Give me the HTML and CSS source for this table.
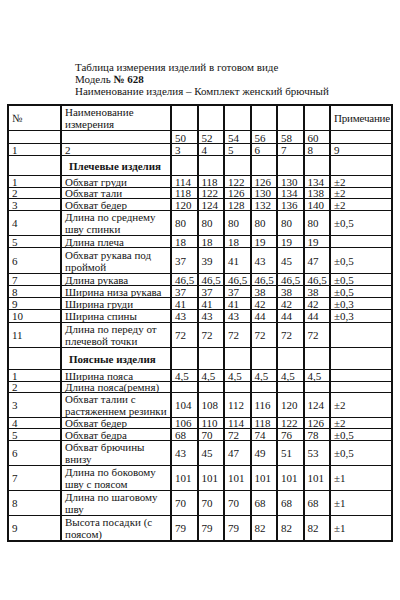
FILE: index.html
```html
<!DOCTYPE html>
<html lang="ru">
<head>
<meta charset="utf-8">
<link rel="stylesheet" href="styles.css">
</head>
<body>
<div class="page">
  <div class="title">
    <div>Таблица измерения изделий в готовом виде</div>
    <div>Модель <b>№ 628</b></div>
    <div>Наименование изделия – Комплект женский брючный</div>
  </div>
  <table class="sizes">
    <colgroup>
      <col class="c-num"><col class="c-name">
      <col class="c-size"><col class="c-size"><col class="c-size"><col class="c-size"><col class="c-size"><col class="c-size">
      <col class="c-note">
    </colgroup>
    <tr class="h26 tall"><td>№</td><td class="top">Наименование измерения</td><td></td><td></td><td></td><td></td><td></td><td></td><td class="note">Примечание</td></tr>
    <tr class="h13"><td></td><td></td><td class="low">50</td><td class="low">52</td><td class="low">54</td><td class="low">56</td><td class="low">58</td><td class="low">60</td><td></td></tr>
    <tr class="h12"><td>1</td><td>2</td><td>3</td><td>4</td><td>5</td><td>6</td><td>7</td><td>8</td><td>9</td></tr>
    <tr class="h21"><td></td><td class="sec">Плечевые изделия</td><td></td><td></td><td></td><td></td><td></td><td></td><td></td></tr>
    <tr class="h12"><td>1</td><td>Обхват груди</td><td>114</td><td>118</td><td>122</td><td>126</td><td>130</td><td>134</td><td>±2</td></tr>
    <tr class="h11"><td>2</td><td>Обхват тали</td><td>118</td><td>122</td><td>126</td><td>130</td><td>134</td><td>138</td><td>±2</td></tr>
    <tr class="h12"><td>3</td><td>Обхват бедер</td><td>120</td><td>124</td><td>128</td><td>132</td><td>136</td><td>140</td><td>±2</td></tr>
    <tr class="h24 tall"><td>4</td><td>Длина по среднему шву спинки</td><td>80</td><td>80</td><td>80</td><td>80</td><td>80</td><td>80</td><td>±0,5</td></tr>
    <tr class="h12"><td>5</td><td>Длина плеча</td><td>18</td><td>18</td><td>18</td><td>19</td><td>19</td><td>19</td><td></td></tr>
    <tr class="h27 tall"><td>6</td><td>Обхват рукава под проймой</td><td>37</td><td>39</td><td>41</td><td>43</td><td>45</td><td>47</td><td>±0,5</td></tr>
    <tr class="h12"><td>7</td><td>Длина рукава</td><td>46,5</td><td>46,5</td><td>46,5</td><td>46,5</td><td>46,5</td><td>46,5</td><td>±0,5</td></tr>
    <tr class="h12"><td>8</td><td>Ширина низа рукава</td><td>37</td><td>37</td><td>37</td><td>38</td><td>38</td><td>38</td><td>±0,5</td></tr>
    <tr class="h12"><td>9</td><td>Ширина груди</td><td>41</td><td>41</td><td>41</td><td>42</td><td>42</td><td>42</td><td>±0,3</td></tr>
    <tr class="h13"><td>10</td><td>Ширина спины</td><td>43</td><td>43</td><td>43</td><td>44</td><td>44</td><td>44</td><td>±0,3</td></tr>
    <tr class="h24 tall"><td>11</td><td>Длина по переду от плечевой точки</td><td>72</td><td>72</td><td>72</td><td>72</td><td>72</td><td>72</td><td></td></tr>
    <tr class="h23"><td></td><td class="sec">Поясные изделия</td><td></td><td></td><td></td><td></td><td></td><td></td><td></td></tr>
    <tr class="h12"><td>1</td><td>Ширина пояса</td><td>4,5</td><td>4,5</td><td>4,5</td><td>4,5</td><td>4,5</td><td>4,5</td><td></td></tr>
    <tr class="h11"><td>2</td><td>Длина пояса(ремня)</td><td></td><td></td><td></td><td></td><td></td><td></td><td></td></tr>
    <tr class="h23 tall"><td>3</td><td>Обхват талии с растяженнем резинки</td><td>104</td><td>108</td><td>112</td><td>116</td><td>120</td><td>124</td><td>±2</td></tr>
    <tr class="h11"><td>4</td><td>Обхват бедер</td><td>106</td><td>110</td><td>114</td><td>118</td><td>122</td><td>126</td><td>±2</td></tr>
    <tr class="h12"><td>5</td><td>Обхват бедра</td><td>68</td><td>70</td><td>72</td><td>74</td><td>76</td><td>78</td><td>±0,5</td></tr>
    <tr class="h24 tall"><td>6</td><td>Обхват брючины внизу</td><td>43</td><td>45</td><td>47</td><td>49</td><td>51</td><td>53</td><td>±0,5</td></tr>
    <tr class="h25 tall"><td>7</td><td>Длина по боковому шву с поясом</td><td>101</td><td>101</td><td>101</td><td>101</td><td>101</td><td>101</td><td>±1</td></tr>
    <tr class="h25 tall"><td>8</td><td>Длина по шаговому шву</td><td>70</td><td>70</td><td>70</td><td>68</td><td>68</td><td>68</td><td>±1</td></tr>
    <tr class="h25 tall"><td>9</td><td>Высота посадки (с поясом)</td><td>79</td><td>79</td><td>79</td><td>82</td><td>82</td><td>82</td><td>±1</td></tr>
  </table>
</div>
</body>
</html>
```
FILE: styles.css
```css
html, body {
  margin: 0;
  padding: 0;
  background: #fff;
}
.page {
  padding: 61px 0 0 7px;
  font-family: "Liberation Serif", "Times New Roman", serif;
  font-size: 11px;
  line-height: 12px;
  color: #151515;
}
.title {
  margin-left: 68px;
  margin-bottom: 7px;
}
.title b {
  font-weight: bold;
}
.sizes {
  border-collapse: collapse;
  table-layout: fixed;
  width: 384px;
  border: 2px solid #111;
}
.c-num { width: 53px; }
.c-name { width: 110px; }
.c-size { width: 26.5px; }
.c-note { width: 62px; }
.sizes td {
  border: 1px solid #111;
  border-left-width: 2px;
  padding: 0 0 0 3px;
  vertical-align: middle;
  line-height: 10px;
  white-space: normal;
  overflow: hidden;
}
.sizes .tall td { line-height: 12px; }
.sizes td.note { letter-spacing: -0.2px; }
.sizes td.top { vertical-align: top; }
.sizes td.low { vertical-align: bottom; }
.sizes td.sec {
  font-weight: bold;
  padding-left: 7px;
}
.h11 td { height: 10px; }
.h12 td { height: 11px; }
.h13 td { height: 12px; }
.h21 td { height: 19px; }
.h23 td { height: 21px; }
.h24 td { height: 23px; }
.h25 td { height: 24px; }
.h26 td { height: 23px; }
.h27 td { height: 25px; }
```
